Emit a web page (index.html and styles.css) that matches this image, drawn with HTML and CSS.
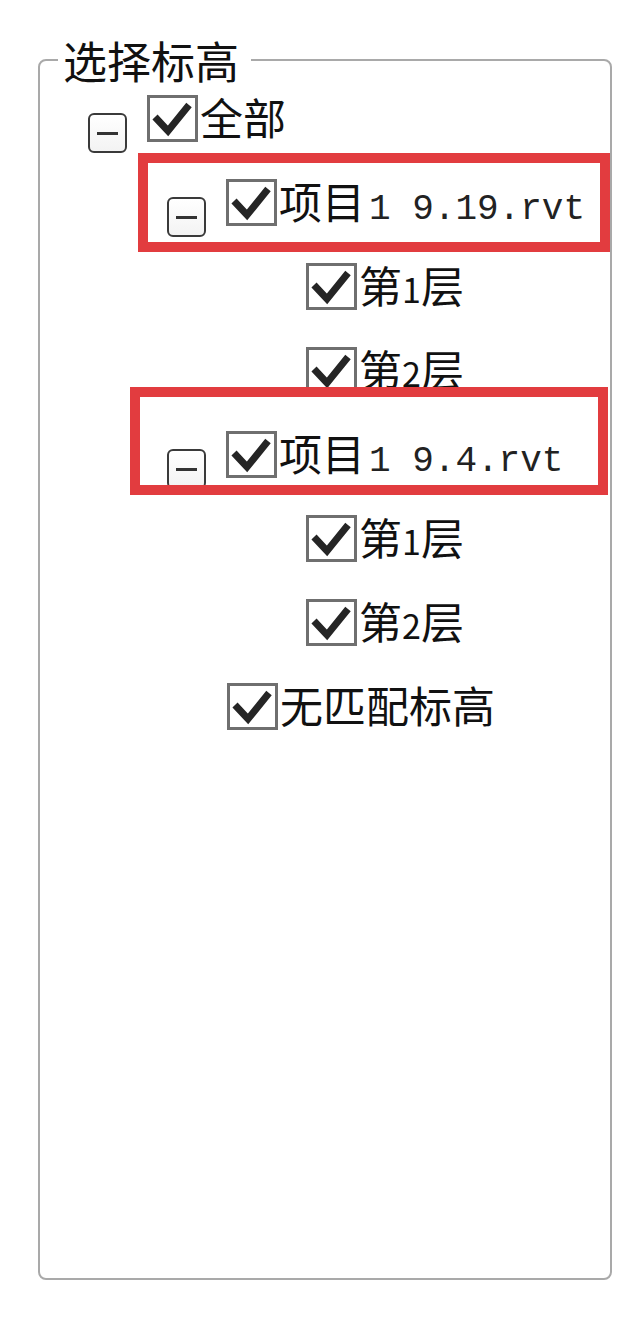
FILE: index.html
```html
<!DOCTYPE html>
<html lang="zh-CN">

<head>
    <meta charset="UTF-8">
    <meta name="viewport" content="width=device-width, initial-scale=1.0">
    <title>选择标高</title>
    <link rel="stylesheet" href="styles.css">
</head>

<body>
    <div class="page">
        <fieldset class="group">
            <legend>选择标高</legend>
            <!--标高树-->
            <ul class="tree">
                <li class="node lv0">
                    <span class="fold"><i></i></span>
                    <span class="check"><svg viewBox="0 0 51 47"><polyline points="8,22 21,36 42,10" /></svg></span>
                    <span class="label">全部</span>
                </li>
                <li class="node lv1">
                    <span class="fold"><i></i></span>
                    <span class="check"><svg viewBox="0 0 51 47"><polyline points="8,22 21,36 42,10" /></svg></span>
                    <span class="label">项目<span class="file">1 9.19.rvt</span></span>
                </li>
                <li class="node lv2">
                    <span class="check"><svg viewBox="0 0 51 47"><polyline points="8,22 21,36 42,10" /></svg></span>
                    <span class="label">第<span class="num">1</span>层</span>
                </li>
                <li class="node lv2">
                    <span class="check"><svg viewBox="0 0 51 47"><polyline points="8,22 21,36 42,10" /></svg></span>
                    <span class="label">第<span class="num">2</span>层</span>
                </li>
                <li class="node lv1">
                    <span class="fold"><i></i></span>
                    <span class="check"><svg viewBox="0 0 51 47"><polyline points="8,22 21,36 42,10" /></svg></span>
                    <span class="label">项目<span class="file">1 9.4.rvt</span></span>
                </li>
                <li class="node lv2">
                    <span class="check"><svg viewBox="0 0 51 47"><polyline points="8,22 21,36 42,10" /></svg></span>
                    <span class="label">第<span class="num">1</span>层</span>
                </li>
                <li class="node lv2">
                    <span class="check"><svg viewBox="0 0 51 47"><polyline points="8,22 21,36 42,10" /></svg></span>
                    <span class="label">第<span class="num">2</span>层</span>
                </li>
                <li class="node lv1 leaf">
                    <span class="check"><svg viewBox="0 0 51 47"><polyline points="8,22 21,36 42,10" /></svg></span>
                    <span class="label">无匹配标高</span>
                </li>
            </ul>
        </fieldset>
        <!--红框标注-->
        <div class="mark mark-a"></div>
        <div class="mark mark-b"></div>
    </div>
</body>

</html>
```

FILE: styles.css
```css
* {
    margin: 0;
    padding: 0
}

ul {
    list-style: none
}

body {
    background-color: #fff;
    font-family: "Noto Sans CJK SC", "Noto Sans", sans-serif;
    color: #111;
}

.page {
    position: relative;
    width: 642px;
    height: 1324px;
    padding-top: 40px;
    box-sizing: border-box;
}

.group {
    width: 574px;
    height: 1240px;
    margin-left: 38px;
    box-sizing: border-box;
    border: 2px solid #a9a9a9;
    border-radius: 8px;
}

.group legend {
    margin-left: 18px;
    padding: 0 12px 0 5px;
    font-size: 44px;
    line-height: 40px;
    color: #111;
}

.tree {
    margin-top: 9px;
}

.node {
    display: flex;
    align-items: flex-start;
    height: 84px;
}

.lv0 {
    padding-left: 48px;
}

.lv1 {
    padding-left: 127px;
}

.lv1.leaf {
    padding-left: 187px;
}

.lv2 {
    padding-left: 266px;
}

.fold {
    width: 39px;
    height: 40px;
    margin-top: 24px;
    margin-right: 20px;
    box-sizing: border-box;
    border: 2px solid #3a3a3a;
    border-radius: 6px;
    background: linear-gradient(#fff, #f3f3f3);
    display: flex;
    align-items: center;
    justify-content: center;
}

.fold i {
    display: block;
    width: 21px;
    height: 3px;
    background-color: #333;
}

.check {
    width: 51px;
    height: 47px;
    margin-top: 6px;
    box-sizing: border-box;
    border: 3px solid #6f6f6f;
    background-color: #fff;
}

.check svg {
    display: block;
    margin: -3px 0 0 -3px;
    width: 51px;
    height: 47px;
}

.check polyline {
    fill: none;
    stroke: #252525;
    stroke-width: 7;
    stroke-linejoin: miter;
}

.label {
    margin-left: 2px;
    margin-top: 4px;
    font-size: 43px;
    line-height: 47px;
    white-space: nowrap;
}

.label .file {
    margin-left: 4px;
    font-family: "Liberation Mono", monospace;
    font-size: 36px;
    color: #222;
}

.label .num {
    font-size: 34px;
}

.mark {
    position: absolute;
    box-sizing: border-box;
    border: 10px solid #e23c3f;
}

.mark-a {
    left: 138px;
    top: 153px;
    width: 472px;
    height: 99px;
}

.mark-b {
    left: 130px;
    top: 387px;
    width: 478px;
    height: 108px;
}
```
